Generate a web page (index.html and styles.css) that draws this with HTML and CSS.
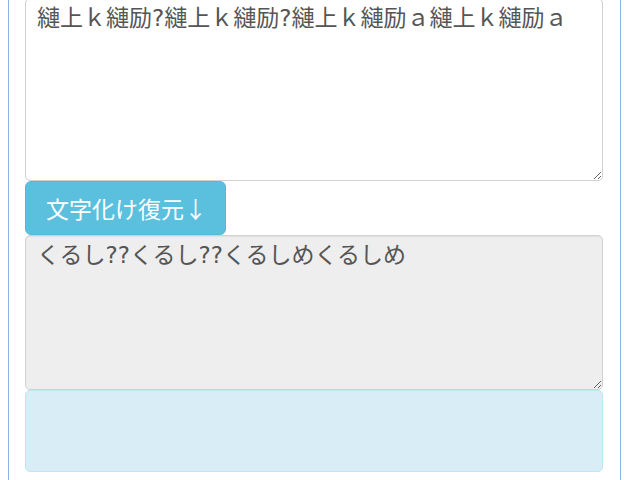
FILE: index.html
```html
<!DOCTYPE html>
<html lang="ja">
<head>
  <meta charset="UTF-8">
  <title>文字化け復元</title>
  <link rel="stylesheet" href="styles.css">
</head>
<body>

<div class="container">
  <textarea id="source" class="form-control src">縺上ｋ縺励?縺上ｋ縺励?縺上ｋ縺励ａ縺上ｋ縺励ａ</textarea>
  <button class="btn-info">文字化け復元↓</button>
  <textarea id="result" class="form-control out" readonly>くるし??くるし??くるしめくるしめ</textarea>
  <div class="alert-info"></div>
</div>

</body>
</html>
```

FILE: styles.css
```css
body {
  margin: -2px 7px 0 8px;
  font-family: "Noto Sans CJK JP", "Noto Sans", sans-serif;
  background: #fff;
}
.container {
  border-left: 1px solid #8ab4e8;
  border-right: 1px solid #8ab4e8;
  padding: 0 17px 0 16px;
  height: 490px;
}
.form-control {
  display: block;
  box-sizing: border-box;
  width: 100%;
  margin: 0;
  padding: 6px 11px;
  border: 1px solid #d2d2d2;
  border-radius: 5px;
  font-family: "DejaVu Sans", "Noto Sans CJK JP", sans-serif;
  font-size: 23px;
  line-height: 1.2;
  color: #555;
  background: #fff;
  box-shadow: inset 0 1px 1px rgba(0,0,0,0.06);
}
.src { height: 183px; }
.out {
  height: 155px;
  background: #eee;
}
.btn-info {
  display: block;
  box-sizing: border-box;
  width: 201px;
  height: 54px;
  padding: 0 0 0 20px;
  border: 1px solid #52bbdb;
  border-radius: 6px;
  background: #5bc0de;
  color: #fff;
  font-family: "Noto Sans CJK JP", sans-serif;
  font-size: 23px;
  white-space: nowrap;
  text-align: left;
  cursor: pointer;
}
.alert-info {
  box-sizing: border-box;
  height: 82px;
  background: #d9edf7;
  border: 1px solid #bce8f1;
  border-radius: 5px;
}
```
